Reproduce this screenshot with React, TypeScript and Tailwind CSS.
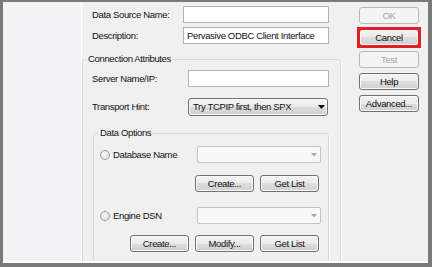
import type { ReactNode } from "react";

const Button = ({
  children,
  className = "",
  disabled = false,
}: {
  children: ReactNode;
  className?: string;
  disabled?: boolean;
}) => (
  <div
    className={`flex h-[17px] shrink-0 items-center justify-center rounded-[3px] border ${
      disabled
        ? "border-[#b5b9bc] bg-[#f4f4f4] text-[#a2a2a2]"
        : "border-[#707070] bg-[linear-gradient(#f3f3f3_0%,#ebebeb_50%,#dddddd_50%,#d0d0d0_100%)] text-[#111] shadow-[inset_0_0_0_1px_#fafafa]"
    } ${className}`}
  >
    {children}
  </div>
);

const TextBox = ({ className = "", value = "" }: { className?: string; value?: string }) => (
  <div className={`flex h-[17px] items-center border border-[#aeb3ba] bg-white pl-[3px] ${className}`}>
    {value}
  </div>
);

const DisabledCombo = () => (
  <div className="ml-auto mr-[7px] flex h-[17px] w-[124px] items-center justify-end rounded-[2px] border border-[#c3c3c3] bg-[#f8f8f8] pr-[3px]">
    <svg width="6" height="4" viewBox="0 0 6 4">
      <path d="M0 0H6L3 3.5Z" fill="#a9a9a9" />
    </svg>
  </div>
);

const Radio = ({ label }: { label: string }) => (
  <div className="flex items-center pl-[6px]">
    <span className="h-[10px] w-[10px] rounded-full border border-[#9c9c9c] bg-[radial-gradient(circle_at_45%_45%,#fafafa,#d9d9d9)]" />
    <span className="ml-[3px]">{label}</span>
  </div>
);

export default function App() {
  return (
    <div className="h-[267px] w-[432px] bg-[#7a7a7a] pb-[4px] pl-[3px] pr-[4px] pt-[2px]">
      <div className="flex h-full overflow-hidden border-b-2 border-white bg-[#f0f0f0] font-['Liberation_Sans',Arial,sans-serif] text-[9.5px] leading-[12px] tracking-[-0.35px] text-[#111]">
        <div className="w-[79px] shrink-0 border-r border-white bg-[#f3f3f5]" />

        {/* form column */}
        <div className="flex w-[259px] shrink-0 flex-col pt-[4px]">
          <div className="flex h-[17px] items-center pl-[10px]">
            <span className="w-[91px]">Data Source Name:</span>
            <TextBox className="w-[146px]" />
          </div>
          <div className="mt-[4px] flex h-[17px] items-center pl-[10px]">
            <span className="w-[91px]">Description:</span>
            <TextBox className="w-[146px]" value="Pervasive ODBC Client Interface" />
          </div>

          <fieldset className="mt-[9px] h-[260px] w-[259px] shrink-0 rounded-[3px] border border-[#d5d9dc] shadow-[1px_1px_0_#fff]">
            <legend className="ml-[3px] px-[2px] leading-[12px]">Connection Attributes</legend>

            <div className="mt-[5px] flex h-[17px] items-center pl-[9px]">
              <span className="w-[96px]">Server Name/IP:</span>
              <TextBox className="w-[141px]" />
            </div>

            <div className="mt-[11px] flex h-[18px] items-center pl-[9px]">
              <span className="w-[96px]">Transport Hint:</span>
              <div className="flex h-[18px] w-[140px] items-center justify-between rounded-[3px] border border-[#707070] bg-[linear-gradient(#f3f3f3_0%,#ebebeb_50%,#dddddd_50%,#d0d0d0_100%)] pl-[4px] pr-[2px] shadow-[inset_0_0_0_1px_#fafafa]">
                <span>Try TCPIP first, then SPX</span>
                <svg width="7" height="4" viewBox="0 0 7 4">
                  <path d="M0 0H7L3.5 4Z" fill="#000" />
                </svg>
              </div>
            </div>

            <fieldset className="ml-[10px] mt-[11px] h-[200px] w-[236px] rounded-[3px] border border-[#d5d9dc] shadow-[1px_1px_0_#fff]">
              <legend className="ml-[4px] px-[2px] leading-[12px]">Data Options</legend>

              <div className="mt-[7px] flex h-[17px] items-center">
                <Radio label="Database Name" />
                <DisabledCombo />
              </div>
              <div className="mt-[12px] flex justify-end gap-[6px] pr-[9px]">
                <Button className="w-[59px]">Create...</Button>
                <Button className="w-[59px]">Get List</Button>
              </div>

              <div className="mt-[15px] flex h-[17px] items-center">
                <Radio label="Engine DSN" />
                <DisabledCombo />
              </div>
              <div className="mt-[11px] flex justify-end gap-[6px] pr-[9px]">
                <Button className="w-[59px]">Create...</Button>
                <Button className="w-[59px]">Modify...</Button>
                <Button className="w-[59px]">Get List</Button>
              </div>
            </fieldset>
          </fieldset>
        </div>

        {/* dialog buttons */}
        <div className="ml-[18px] flex w-[60px] shrink-0 flex-col gap-[5px] pt-[5px]">
          <Button disabled>OK</Button>
          <div className="relative">
            <Button>Cancel</Button>
            <span className="absolute -inset-[2px] border-[3px] border-[#e31e24]" />
          </div>
          <Button disabled>Test</Button>
          <Button>Help</Button>
          <Button>Advanced...</Button>
        </div>
      </div>
    </div>
  );
}
